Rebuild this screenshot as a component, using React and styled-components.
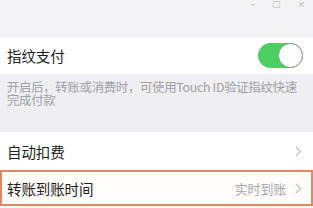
import React from 'react'
import styled, { createGlobalStyle } from 'styled-components'

const GlobalStyle = createGlobalStyle`
  html, body {
    margin: 0;
    padding: 0;
    background: #fbf7f5;
  }
  body {
    font-family: "Noto Sans CJK SC", "Noto Sans", sans-serif;
  }
`

const Screen = styled.div`
  width: 313px;
  height: 208px;
  overflow: hidden;
  display: flex;
  flex-direction: column;
  background: #fbf7f5;
`

const TitleBar = styled.div`
  height: 37px;
  flex: none;
  background: #f3f3f5;
  border-bottom: 1px solid #ececef;
  box-sizing: border-box;
  display: flex;
  justify-content: flex-end;
  align-items: flex-start;
  gap: 17px;
  padding-right: 8px;
`

const WinButton = styled.span`
  font-family: "DejaVu Sans", sans-serif;
  font-size: 9px;
  line-height: 9px;
  margin-top: 0;
  color: #b9b9bd;
`

const Row = styled.div`
  height: ${p => p.$h || 38}px;
  flex: none;
  box-sizing: border-box;
  background: ${p => (p.$highlight ? '#fffcfa' : '#ffffff')};
  border: ${p => (p.$highlight ? '2.5px solid #d98b68' : 'none')};
  display: flex;
  align-items: center;
  justify-content: space-between;
  padding: 0 ${p => (p.$highlight ? 9 : 11)}px 0 ${p => (p.$highlight ? 5 : 7)}px;
`

const Label = styled.span`
  font-size: ${p => p.$size || 14.5}px;
  color: #1e1e22;
  letter-spacing: -0.1px;
`

const Note = styled.div`
  height: 58px;
  flex: none;
  box-sizing: border-box;
  background: #efeff3;
  padding: 7px 8px 0 7px;
  font-size: 12.4px;
  line-height: 13px;
  color: #a0a0a6;
  letter-spacing: -0.3px;
`

const Right = styled.div`
  display: flex;
  align-items: center;
  gap: 9px;
`

const Value = styled.span`
  font-size: 13px;
  color: #a8a8ad;
  letter-spacing: -0.2px;
`

const Track = styled.div`
  width: 45px;
  height: 25px;
  border-radius: 13px;
  background: #4ccf61;
  position: relative;
  margin-right: -1px;
`

const Knob = styled.div`
  position: absolute;
  right: 0;
  top: 0;
  width: 25px;
  height: 25px;
  box-sizing: border-box;
  border-radius: 50%;
  background: #fdfdfd;
  border: 1px solid #8f9a92;
`

const Chevron = () => (
  <svg width="7" height="11" viewBox="0 0 7 11">
    <path d="M1 1l4.5 4.5L1 10" fill="none" stroke="#c4c4c9" strokeWidth="1.4" />
  </svg>
)

export default function App() {
  return (
    <Screen>
      <GlobalStyle />
      <TitleBar>
        <WinButton>–</WinButton>
        <WinButton>□</WinButton>
        <WinButton>×</WinButton>
      </TitleBar>
      <Row $h={37}>
        <Label>指纹支付</Label>
        <Track>
          <Knob />
        </Track>
      </Row>
      <Note>开启后，转账或消费时，可使用Touch ID验证指纹快速完成付款</Note>
      <Row $h={38}>
        <Label>自动扣费</Label>
        <Chevron />
      </Row>
      <Row $h={36} $highlight>
        <Label>转账到账时间</Label>
        <Right>
          <Value>实时到账</Value>
          <Chevron />
        </Right>
      </Row>
    </Screen>
  )
}
